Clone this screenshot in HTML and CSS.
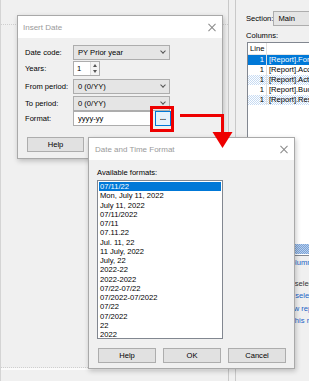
FILE: index.html
```html
<!DOCTYPE html>
<html>
<head>
<meta charset="utf-8">
<link rel="stylesheet" href="styles.css">
</head>
<body>
<div class="app">
  <div class="pane-left">
    <div class="dots-top"></div>
    <div class="fill"></div>
    <div class="dots-bottom"></div>
  </div>
  <div class="splitter"></div>
  <div class="pane-right">
    <div class="section-row"><span class="lbl-section">Section:</span><div class="combo combo-main">Main</div></div>
    <div class="lbl-columns">Columns:</div>
    <div class="grid">
      <div class="grow ghead"><span class="c1">Line</span><span class="c2"></span></div>
      <div class="grow sel"><span class="c1">1</span><span class="c2">[Report].Format</span></div>
      <div class="grow"><span class="c1">1</span><span class="c2">[Report].Account</span></div>
      <div class="grow hatch"><span class="c1">1</span><span class="c2">[Report].Actual</span></div>
      <div class="grow"><span class="c1">1</span><span class="c2">[Report].Budget</span></div>
      <div class="grow hatch"><span class="c1">1</span><span class="c2">[Report].Result</span></div>
      <div class="gfill"></div>
      <div class="gbar"></div>
    </div>
    <div class="links">
      <div class="link l1">Insert column</div>
      <div class="plain">No selection</div>
      <div class="link l3">Edit selection</div>
      <div class="link l4">New report</div>
      <div class="link l5">Print this report</div>
    </div>
  </div>
</div>

<div class="dlg dlg-insert">
  <div class="dlg-title"><span>Insert Date</span><span class="x"></span></div>
  <div class="dlg-body">
    <div class="frow r1"><label>Date code:</label><div class="combo w97">PY Prior year<i class="chev"></i></div></div>
    <div class="frow r2"><label>Years:</label><div class="spin"><span>1</span><span class="spin-btns"><i class="up"></i><i class="dn"></i></span></div></div>
    <div class="frow r3"><label>From period:</label><div class="combo w97">0 (0/YY)<i class="chev"></i></div></div>
    <div class="frow r4"><label>To period:</label><div class="combo w97">0 (0/YY)<i class="chev"></i></div></div>
    <div class="frow r5"><label>Format:</label><div class="text">yyyy-yy</div><div class="dots-btn">...</div></div>
    <div class="brow"><div class="btn">Help</div></div>
  </div>
</div>

<div class="dlg dlg-format">
  <div class="dlg-title"><span>Date and Time Format</span><span class="x"></span></div>
  <div class="dlg-body2">
    <div class="avail">Available formats:</div>
    <div class="list">
      <div class="item on">07/11/22</div>
      <div class="item">Mon, July 11, 2022</div>
      <div class="item">July 11, 2022</div>
      <div class="item">07/11/2022</div>
      <div class="item">07/11</div>
      <div class="item">07.11.22</div>
      <div class="item">Jul. 11, 22</div>
      <div class="item">11 July, 2022</div>
      <div class="item">July, 22</div>
      <div class="item">2022-22</div>
      <div class="item">2022-2022</div>
      <div class="item">07/22-07/22</div>
      <div class="item">07/2022-07/2022</div>
      <div class="item">07/22</div>
      <div class="item">07/2022</div>
      <div class="item">22</div>
      <div class="item">2022</div>
    </div>
    <div class="brow2"><div class="btn b58">Help</div><div class="btn b58">OK</div><div class="btn b58">Cancel</div></div>
  </div>
</div>

<svg class="annot" width="309" height="381" viewBox="0 0 309 381">
  <rect x="151.5" y="107.5" width="21" height="23" fill="none" stroke="#ee0000" stroke-width="3"/>
  <polyline points="180,115.5 222.5,115.5 222.5,133" fill="none" stroke="#ee0000" stroke-width="3"/>
  <polygon points="212.5,132 232.5,132 222.5,148" fill="#ee0000"/>
</svg>
</body>
</html>
```

FILE: styles.css
```css
* { box-sizing: border-box; }
html, body { margin: 0; padding: 0; }
body {
  width: 309px; height: 381px; overflow: hidden; position: relative;
  background: #f0f0f0;
  font-family: "Liberation Sans", Arial, sans-serif;
  font-size: 7.6px; color: #000;
}
.app { display: flex; height: 381px; border-left: 1px solid #d4d4d4; }
.pane-left { width: 228px; display: flex; flex-direction: column; border-right: 1px solid #c9c9c9; }
.dots-top { height: 25px; border-bottom: 1px dotted #cfcfcf; }
.fill { flex: 1; }
.dots-bottom { height: 14px; border-top: 1px dotted #cfcfcf; box-shadow: inset 0 2px 0 #fbfbfb; }
.splitter { width: 6px; }
.pane-right { flex: 1; border-left: 1px solid #c9c9c9; overflow: hidden; padding: 11px 0 0 10px; }
.section-row { display: flex; align-items: center; height: 15px; }
.lbl-section { width: 31px; }
.combo {
  height: 15px; border: 1px solid #adadad; background: #e5e5e5;
  display: flex; align-items: center; padding-left: 4px; position: relative; white-space: nowrap;
}
.combo-main { width: 60px; flex: none; }
.lbl-columns { margin-top: 4px; height: 12px; line-height: 12px; }
.grid { margin-left: 1px; width: 90px; height: 214px; border: 1px solid #828790; background: #fff; display: flex; flex-direction: column; }
.grow { display: flex; height: 10px; line-height: 10px; white-space: nowrap; }
.ghead { height: 12px; line-height: 12px; border-bottom: 1px solid #e6e6e6; }
.ghead .c1 { text-align: left; padding-left: 2px; }
.c1 { width: 19px; flex: none; text-align: right; padding-right: 2px; border-right: 1px solid #e0e0e0; }
.c2 { padding-left: 2px; }
.sel { background: #0078d7; color: #fff; }
.hatch { background: repeating-conic-gradient(#c6dbf3 0 25%, #fff 0 50%) 0 0 / 2px 2px; }
.gfill { flex: 1; }
.gbar { height: 10px; margin-bottom: 1px; background: repeating-conic-gradient(#7aa3d8 0 25%, #b9cfec 0 50%) 0 0 / 2px 2px; }
.links { padding-top: 1px; }
.link, .plain { height: 12.5px; line-height: 12.5px; white-space: nowrap; color: #1a62c6; }
.l1 { padding-left: 20px; }
.plain { color: #333; margin-top: 8px; padding-left: 37px; }
.l3 { padding-left: 34px; }
.l4 { padding-left: 38px; }
.l5 { padding-left: 29px; }

.dlg { position: absolute; background: #f0f0f0; border: 1px solid #a9a9a9; box-shadow: 1px 2px 5px rgba(0,0,0,.22); }
.dlg-title {
  background: #fff; display: flex; align-items: center; justify-content: space-between;
  font-size: 8px; color: #9a9a9a; padding: 0 6px 0 5px;
}
.x { width: 8px; height: 8px; position: relative; }
.x::before, .x::after { content: ""; position: absolute; left: -1px; top: 3.5px; width: 10px; height: 1px; background: #8a8a8a; transform: rotate(45deg); }
.x::after { transform: rotate(-45deg); }

.dlg-insert { left: 17px; top: 15px; width: 206px; height: 144px; }
.dlg-insert .dlg-title { height: 22px; }
.dlg-body { padding: 7px 0 0 7px; }
.frow { display: flex; align-items: center; height: 15px; }
.frow label { width: 48px; flex: none; }
.r2 { margin-top: 1px; } .r3 { margin-top: 3px; } .r4 { margin-top: 2px; } .r5 { margin-top: 0; }
.w97 { width: 97px; }
.chev { position: absolute; right: 4px; top: 3px; width: 4px; height: 4px; border-right: 1px solid #555; border-bottom: 1px solid #555; transform: rotate(45deg); }
.spin { width: 27px; height: 15px; border: 1px solid #adadad; background: #fff; display: flex; justify-content: space-between; padding-left: 3px; align-items: center; }
.spin-btns { width: 9px; height: 13px; border-left: 1px solid #ddd; display: flex; flex-direction: column; align-items: center; justify-content: space-around; background: #f4f4f4; }
.up, .dn { width: 0; height: 0; border-left: 2.5px solid transparent; border-right: 2.5px solid transparent; }
.up { border-bottom: 3px solid #555; }
.dn { border-top: 3px solid #555; }
.text { width: 79px; height: 15px; border: 1px solid #adadad; background: #fff; padding-left: 4px; line-height: 13px; }
.dots-btn { margin-left: 3px; width: 16px; height: 15px; border: 1px solid #0078d7; background: #e5f1fb; text-align: center; line-height: 12px; font-weight: bold; font-size: 7px; }
.brow { display: flex; gap: 8px; margin-top: 11px; padding-left: 2px; }
.btn { width: 57px; height: 15px; border: 1px solid #adadad; background: #e1e1e1; text-align: center; line-height: 13px; }

.dlg-format { left: 88px; top: 137px; width: 207px; height: 232px; }
.dlg-format .dlg-title { height: 22px; padding-left: 6px; }
.dlg-body2 { padding: 7px 0 0 8px; }
.avail { height: 11px; line-height: 11px; }
.list { margin-top: 2px; width: 126px; height: 159px; border: 1px solid #828790; background: #fff; padding: 1px 0 0 0; }
.item { height: 9.25px; line-height: 9.25px; padding-left: 2px; white-space: nowrap; }
.item.on { background: #0078d7; color: #fff; margin: 0 1px; padding-left: 1px; }
.brow2 { display: flex; gap: 7px; margin-top: 9px; padding-left: 1px; }
.b58 { width: 58px; }

.annot { position: absolute; left: 0; top: 0; pointer-events: none; }
```
